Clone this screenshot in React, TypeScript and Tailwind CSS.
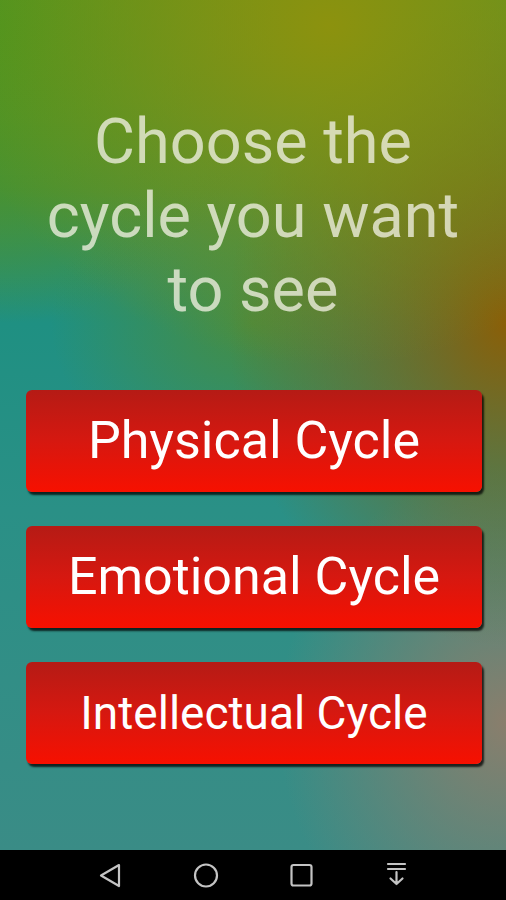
import React from 'react';

const cycles = [
  { label: 'Physical Cycle', size: 'text-[52px]' },
  { label: 'Emotional Cycle', size: 'text-[52px]' },
  { label: 'Intellectual Cycle', size: 'text-[46px]' },
];

const NavBar: React.FC = () => (
  <div className="h-[50px] bg-black flex items-center">
    <svg width="506" height="50" viewBox="0 0 506 50" fill="none" stroke="#c4c4c4" strokeWidth="2.2" strokeLinejoin="round" strokeLinecap="round">
      {/* back */}
      <path d="M119 15 L101 25.5 L119 36 Z" />
      {/* home */}
      <circle cx="206" cy="25.5" r="11" />
      {/* recents */}
      <rect x="291.5" y="15" width="20" height="20.5" rx="2" />
      {/* notification pull */}
      <path d="M388 14 H405 M388 19 H405 M396.5 22 V34 M390.5 28.5 L396.5 34 L402.5 28.5" />
    </svg>
  </div>
);

const App: React.FC = () => {
  return (
    <div
      className="w-[506px] h-[900px] flex flex-col overflow-hidden"
      style={{ fontFamily: 'Roboto, "Noto Sans", sans-serif' }}
    >
      <div className="flex-1 flex flex-col bg-[#3a8e84] bg-[radial-gradient(ellipse_75%_40%_at_65%_3%,#8c920e_0%,rgba(140,146,14,0)_100%),radial-gradient(ellipse_55%_38%_at_100%_38%,#8a5f08_0%,rgba(138,95,8,0)_100%),radial-gradient(ellipse_40%_18%_at_50%_38%,rgba(80,140,50,0.8)_0%,rgba(80,140,50,0)_100%),radial-gradient(ellipse_55%_35%_at_0%_3%,#4c9520_0%,rgba(76,149,32,0)_100%),radial-gradient(ellipse_45%_30%_at_100%_85%,#8a7e6c_0%,rgba(138,126,108,0)_100%),linear-gradient(180deg,#5a9226_0%,#458f40_22%,#1f9082_38%,#2a9086_60%,#3a8c86_100%)]">
        <h1 className="pt-[105px] text-center text-[63px] leading-[74px] font-normal text-[rgba(240,240,225,0.78)]">
          Choose the
          <br />
          cycle you want
          <br />
          to see
        </h1>

        <div className="mt-[63px] flex flex-col gap-[34px] pl-[26px] pr-[24px]">
          {cycles.map((c) => (
            <button
              key={c.label}
              className={`h-[102px] w-full rounded-[6px] bg-[linear-gradient(180deg,#b51b15_0%,#d61810_50%,#f71000_100%)] shadow-[2px_3px_2px_rgba(0,0,0,0.75)] text-white leading-none font-normal flex items-center justify-center ${c.size}`}
            >
              {c.label}
            </button>
          ))}
        </div>
      </div>
      <NavBar />
    </div>
  );
};

export default App;
